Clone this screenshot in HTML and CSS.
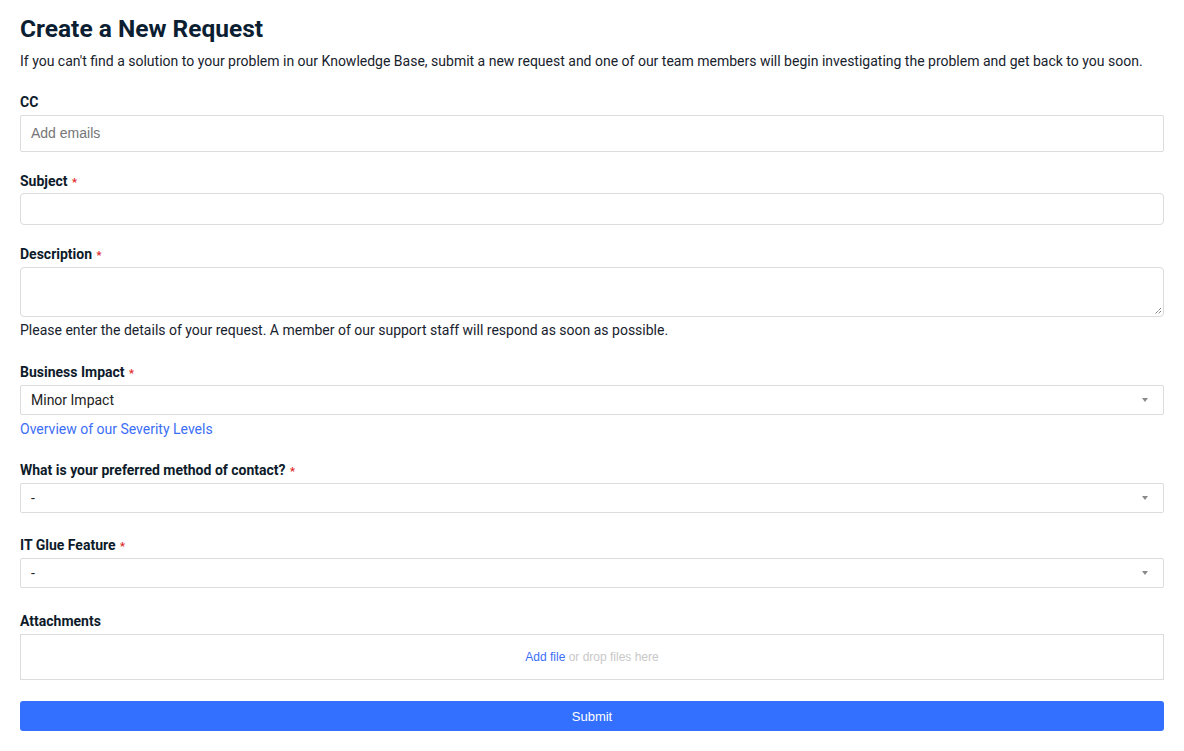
FILE: index.html
```html
<!DOCTYPE html>
<html lang="en">
<head>
<meta charset="utf-8">
<title>Create a New Request</title>
<link rel="stylesheet" href="styles.css">
</head>
<body>
<main class="page">
  <h1 class="title">Create a New Request</h1>
  <p class="intro">If you can't find a solution to your problem in our Knowledge Base, submit a new request and one of our team members will begin investigating the problem and get back to you soon.</p>

  <form class="form">
    <div class="field field-cc">
      <label class="label">CC</label>
      <div class="input input-cc">Add emails</div>
    </div>

    <div class="field">
      <label class="label">Subject <span class="req">*</span></label>
      <div class="input input-subject"></div>
    </div>

    <div class="field field-desc">
      <label class="label">Description <span class="req">*</span></label>
      <div class="textarea">
        <svg class="grip" width="8" height="8" viewBox="0 0 8 8"><path d="M7 1L1 7M7 4L4 7" stroke="#444" stroke-width="1" stroke-dasharray="1 1" fill="none"/></svg>
      </div>
      <p class="hint">Please enter the details of your request. A member of our support staff will respond as soon as possible.</p>
    </div>

    <div class="field field-impact">
      <label class="label">Business Impact <span class="req">*</span></label>
      <div class="select"><span class="select-value">Minor Impact</span><span class="caret"></span></div>
      <a class="link" href="#">Overview of our Severity Levels</a>
    </div>

    <div class="field field-contact">
      <label class="label">What is your preferred method of contact? <span class="req">*</span></label>
      <div class="select"><span class="select-value">-</span><span class="caret"></span></div>
    </div>

    <div class="field field-glue">
      <label class="label">IT Glue Feature <span class="req">*</span></label>
      <div class="select"><span class="select-value">-</span><span class="caret"></span></div>
    </div>

    <div class="field field-attach">
      <label class="label">Attachments</label>
      <div class="dropzone"><a class="add-file" href="#">Add file</a>&nbsp;<span class="drop">or drop files here</span></div>
    </div>

    <button type="button" class="submit">Submit</button>
  </form>
</main>
</body>
</html>
```

FILE: styles.css
```css
* { box-sizing: border-box; }

html, body {
  margin: 0;
  padding: 0;
  background: #ffffff;
}

body {
  font-family: Roboto, "Liberation Sans", sans-serif;
  color: #15202b;
}

.page {
  padding: 14px 20px 0 20px;
}

.title {
  margin: 0;
  font-size: 24.5px;
  line-height: 30px;
  font-weight: 700;
  color: #0c1e31;
}

.intro {
  margin: 7px 0 0 0;
  font-size: 14px;
  line-height: 20px;
  color: #17222d;
}

.form {
  display: flex;
  flex-direction: column;
  margin-top: 21px;
}

.field {
  display: flex;
  flex-direction: column;
}

.label {
  display: block;
  height: 20px;
  font-size: 14px;
  line-height: 20px;
  font-weight: 700;
  color: #0d1b2a;
  margin-bottom: 3px;
}

.req {
  color: #e0262b;
  font-size: 11px;
  line-height: 1;
  font-weight: 700;
  margin-left: 1px;
}

.input {
  border: 1px solid #dcdcdc;
  background: #fff;
}

.input-cc {
  height: 37px;
  padding: 0 10px;
  font-family: "Liberation Sans", Arial, sans-serif;
  font-size: 14px;
  line-height: 35px;
  color: #767676;
  border-radius: 2px;
  margin-bottom: 19px;
}

.input-subject {
  height: 32px;
  border-radius: 4px;
  margin-top: -1px;
  margin-bottom: 19px;
}

.textarea {
  position: relative;
  height: 50px;
  border: 1px solid #dcdcdc;
  border-radius: 4px;
}

.grip {
  position: absolute;
  right: 1px;
  bottom: 1px;
}

.hint {
  margin: 3px 0 0 0;
  font-size: 14px;
  line-height: 20px;
  color: #17222d;
}

.field-desc { margin-bottom: 22px; }

.select {
  display: flex;
  align-items: center;
  justify-content: space-between;
  height: 30px;
  border: 1px solid #dcdcdc;
  border-radius: 2px;
  padding: 0 15px 0 10px;
  font-size: 14px;
  color: #222;
}

.select-value { line-height: 28px; }

.caret {
  width: 0;
  height: 0;
  border-left: 3px solid transparent;
  border-right: 3px solid transparent;
  border-top: 4px solid #8a8a8a;
}

.link {
  margin-top: 4px;
  font-size: 14px;
  line-height: 20px;
  color: #3c6ef6;
  text-decoration: none;
}

.field-impact { margin-bottom: 21px; }
.field-contact { margin-bottom: 22px; }
.field-glue { margin-bottom: 23px; }

.dropzone {
  height: 46px;
  border: 1px solid #dcdcdc;
  display: flex;
  align-items: center;
  justify-content: center;
  font-family: "Liberation Sans", Arial, sans-serif;
  font-size: 12px;
}

.add-file {
  color: #3c6ef6;
  text-decoration: none;
}

.drop { color: #c8c8c8; }

.field-attach { margin-bottom: 21px; }

.submit {
  height: 30px;
  width: 100%;
  border: none;
  border-radius: 3px;
  background: #3370ff;
  color: #fff;
  font-family: "Liberation Sans", Arial, sans-serif;
  font-size: 13px;
  font-weight: 400;
  cursor: pointer;
}
```
